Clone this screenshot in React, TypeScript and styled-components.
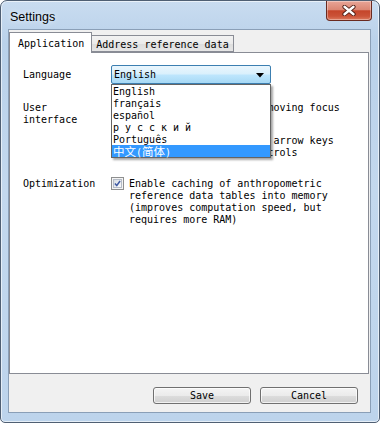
import React from "react";
import styled, { createGlobalStyle } from "styled-components";

const mono = `"DejaVu Sans Mono", "Liberation Mono", "Noto Sans CJK SC", monospace`;

const Global = createGlobalStyle`
  html, body { margin: 0; padding: 0; background: #ffffff; }
  body { width: 380px; height: 423px; overflow: hidden; }
  * { box-sizing: border-box; }
`;

const Window = styled.div`
  width: 380px;
  height: 423px;
  border: 1px solid #4f5f73;
  border-radius: 7px 7px 5px 5px;
  background: linear-gradient(180deg, #c9dcf0 0%, #b9d1ea 10%, #c3d8ee 45%, #bdd4ec 100%);
  box-shadow: inset 0 0 0 1px rgba(255, 255, 255, 0.6);
  display: flex;
  flex-direction: column;
  padding: 0 8px 9px 7px;
  font-family: ${mono};
  font-size: 10px;
  color: #000;
`;

const TitleBar = styled.div`
  height: 28px;
  display: flex;
  align-items: flex-start;
  justify-content: space-between;
`;

const Title = styled.div`
  font-family: "Liberation Sans", Arial, sans-serif;
  font-size: 12.5px;
  line-height: 28px;
  padding-left: 2px;
  padding-top: 2px;
  color: #000;
  text-shadow: 0 0 6px rgba(255, 255, 255, 0.9);
`;

const CloseButton = styled.div`
  width: 46px;
  height: 20px;
  margin-right: -1px;
  border: 1px solid #6a2a20;
  border-top: none;
  border-radius: 0 0 4px 4px;
  background: linear-gradient(180deg, #e8a597 0%, #db8774 45%, #c5452a 52%, #cb5338 80%, #dc7a5e 100%);
  box-shadow: inset 0 0 0 1px rgba(255, 255, 255, 0.35);
  display: flex;
  align-items: center;
  justify-content: center;
`;

const Client = styled.div`
  flex: 1;
  display: flex;
  flex-direction: column;
  background: #f0f0f0;
  border: 1px solid #8a9fb7;
  padding: 2px 1px 0 0;
`;

const TabStrip = styled.div`
  height: 21px;
  display: flex;
  align-items: flex-end;
  margin-bottom: -1px;
  position: relative;
  z-index: 1;
`;

const Tab = styled.div<{ $active?: boolean }>`
  height: ${(p) => (p.$active ? "21px" : "17px")};
  margin-bottom: ${(p) => (p.$active ? "0" : "1px")};
  padding: ${(p) => (p.$active ? "1px 7px 0 8px" : "1px 4px 0 4px")};
  line-height: ${(p) => (p.$active ? "20px" : "16px")};
  border: 1px solid #898c95;
  border-bottom: ${(p) => (p.$active ? "none" : "1px solid #898c95")};
  border-left: ${(p) => (p.$active ? "1px solid #898c95" : "none")};
  background: ${(p) => (p.$active ? "#ffffff" : "linear-gradient(180deg, #f2f2f2 0%, #ebebeb 50%, #dddddd 51%, #e6e6e6 100%)")};
  white-space: nowrap;
`;

const Panel = styled.div`
  height: 322px;
  background: #ffffff;
  border: 1px solid #898c95;
  padding: 12px 12px 0 13px;
  display: flex;
  flex-direction: column;
`;

const Row = styled.div<{ $top?: number }>`
  display: grid;
  grid-template-columns: 80px 1fr;
  column-gap: 8px;
  margin-top: ${(p) => p.$top ?? 0}px;
  line-height: 12px;
`;

const Label = styled.div<{ $center?: boolean }>`
  align-self: ${(p) => (p.$center ? "center" : "start")};
  padding-top: 1px;
  white-space: normal;
`;

const Combo = styled.div`
  position: relative;
  z-index: 5;
  width: 160px;
  height: 19px;
  border: 1px solid #3c7fb1;
  border-radius: 2px;
  background: linear-gradient(180deg, #eaf6fd 0%, #d9f0fc 48%, #bee6fd 52%, #a7d9f5 100%);
  display: flex;
  align-items: center;
  justify-content: space-between;
  padding: 1px 6px 0 2px;
  line-height: 16px;
`;

const DropList = styled.div`
  position: absolute;
  top: 18px;
  left: -1px;
  width: 160px;
  border: 1px solid #646464;
  background: #ffffff;
  box-shadow: 2px 2px 2px rgba(0, 0, 0, 0.35);
  padding: 0;
`;

const Option = styled.div<{ $selected?: boolean; $wide?: boolean }>`
  height: 12px;
  line-height: 13px;
  padding-left: 1px;
  white-space: nowrap;
  letter-spacing: ${(p) => (p.$wide ? "6px" : "0")};
  background: ${(p) => (p.$selected ? "#3399ff" : "transparent")};
  color: ${(p) => (p.$selected ? "#ffffff" : "#000000")};
`;

const Cjk = styled.span`
  font-family: "Noto Sans CJK SC", sans-serif;
  font-size: 11.5px;
  line-height: 12px;
`;

const CheckGroup = styled.div`
  display: flex;
  flex-direction: column;
  gap: 8px;
`;

const CheckItem = styled.div`
  display: flex;
  align-items: flex-start;
  gap: 5px;
  white-space: nowrap;
  line-height: 12px;
`;

const CheckText = styled.div`
  padding-top: 1px;
`;

const Box = styled.div`
  width: 13px;
  height: 13px;
  flex: none;
  border: 1px solid #8e8f8f;
  background: #f4f4f4;
  padding: 1px;
`;

const BoxInner = styled.div`
  width: 100%;
  height: 100%;
  border: 1px solid #b5bcc7;
  background: linear-gradient(135deg, #d7dce2 0%, #eef0f3 60%, #fbfbfb 100%);
  display: flex;
  align-items: center;
  justify-content: center;
`;

const ButtonRow = styled.div`
  display: flex;
  justify-content: flex-end;
  gap: 9px;
  margin-top: 13px;
  padding-right: 11px;
`;

const Button = styled.div`
  width: 98px;
  height: 17px;
  border: 1px solid #707070;
  border-radius: 3px;
  background: linear-gradient(180deg, #f4f4f4 0%, #ebebeb 50%, #dddddd 51%, #cfcfcf 100%);
  box-shadow: inset 0 0 0 1px rgba(255, 255, 255, 0.7);
  display: flex;
  align-items: center;
  justify-content: center;
  line-height: 15px;
`;

function CheckBox({ checked }: { checked?: boolean }) {
  return (
    <Box>
      <BoxInner>
        {checked && (
          <svg width="9" height="9" viewBox="0 0 9 9">
            <path d="M1.2 4.6 L3.5 7.2 L7.8 1.2" fill="none" stroke="#3f5aa3" strokeWidth="2" strokeLinejoin="round" />
          </svg>
        )}
      </BoxInner>
    </Box>
  );
}

export default function App() {
  return (
    <>
      <Global />
      <Window>
        <TitleBar>
          <Title>Settings</Title>
          <CloseButton>
            <svg width="14" height="11" viewBox="0 0 14 11">
              <path d="M2.5 1.8 L11.5 9.2 M11.5 1.8 L2.5 9.2" stroke="#4a1a12" strokeWidth="4.2" strokeLinecap="round" />
              <path d="M2.5 1.8 L11.5 9.2 M11.5 1.8 L2.5 9.2" stroke="#ffffff" strokeWidth="2.4" strokeLinecap="round" />
            </svg>
          </CloseButton>
        </TitleBar>
        <Client>
          <TabStrip>
            <Tab $active>Application</Tab>
            <Tab>Address reference data</Tab>
          </TabStrip>
          <Panel>
            <Row>
              <Label $center>Language</Label>
              <Combo>
                <span>English</span>
                <svg width="8" height="5" viewBox="0 0 8 5">
                  <polygon points="0,0 8,0 4,4.5" fill="#000" />
                </svg>
                <DropList>
                  <Option>English</Option>
                  <Option>français</Option>
                  <Option>español</Option>
                  <Option $wide>русский</Option>
                  <Option>Português</Option>
                  <Option $selected>
                    <Cjk>中文</Cjk>(<Cjk>简体</Cjk>)
                  </Option>
                </DropList>
              </Combo>
            </Row>
            <Row $top={17}>
              <Label>User interface</Label>
              <CheckGroup>
                <CheckItem>
                  <CheckBox checked />
                  <CheckText>Select field text when moving focus</CheckText>
                </CheckItem>
                <CheckItem>
                  <CheckBox checked />
                  <CheckText>
                    Allow using the
                    <br />
                    Enter, Tab, Up and Down arrow keys
                    <br />
                    to navigate between controls
                  </CheckText>
                </CheckItem>
              </CheckGroup>
            </Row>
            <Row $top={18}>
              <Label>Optimization</Label>
              <CheckItem>
                <CheckBox checked />
                <CheckText>
                  Enable caching of anthropometric
                  <br />
                  reference data tables into memory
                  <br />
                  (improves computation speed, but
                  <br />
                  requires more RAM)
                </CheckText>
              </CheckItem>
            </Row>
          </Panel>
          <ButtonRow>
            <Button>Save</Button>
            <Button>Cancel</Button>
          </ButtonRow>
        </Client>
      </Window>
    </>
  );
}
